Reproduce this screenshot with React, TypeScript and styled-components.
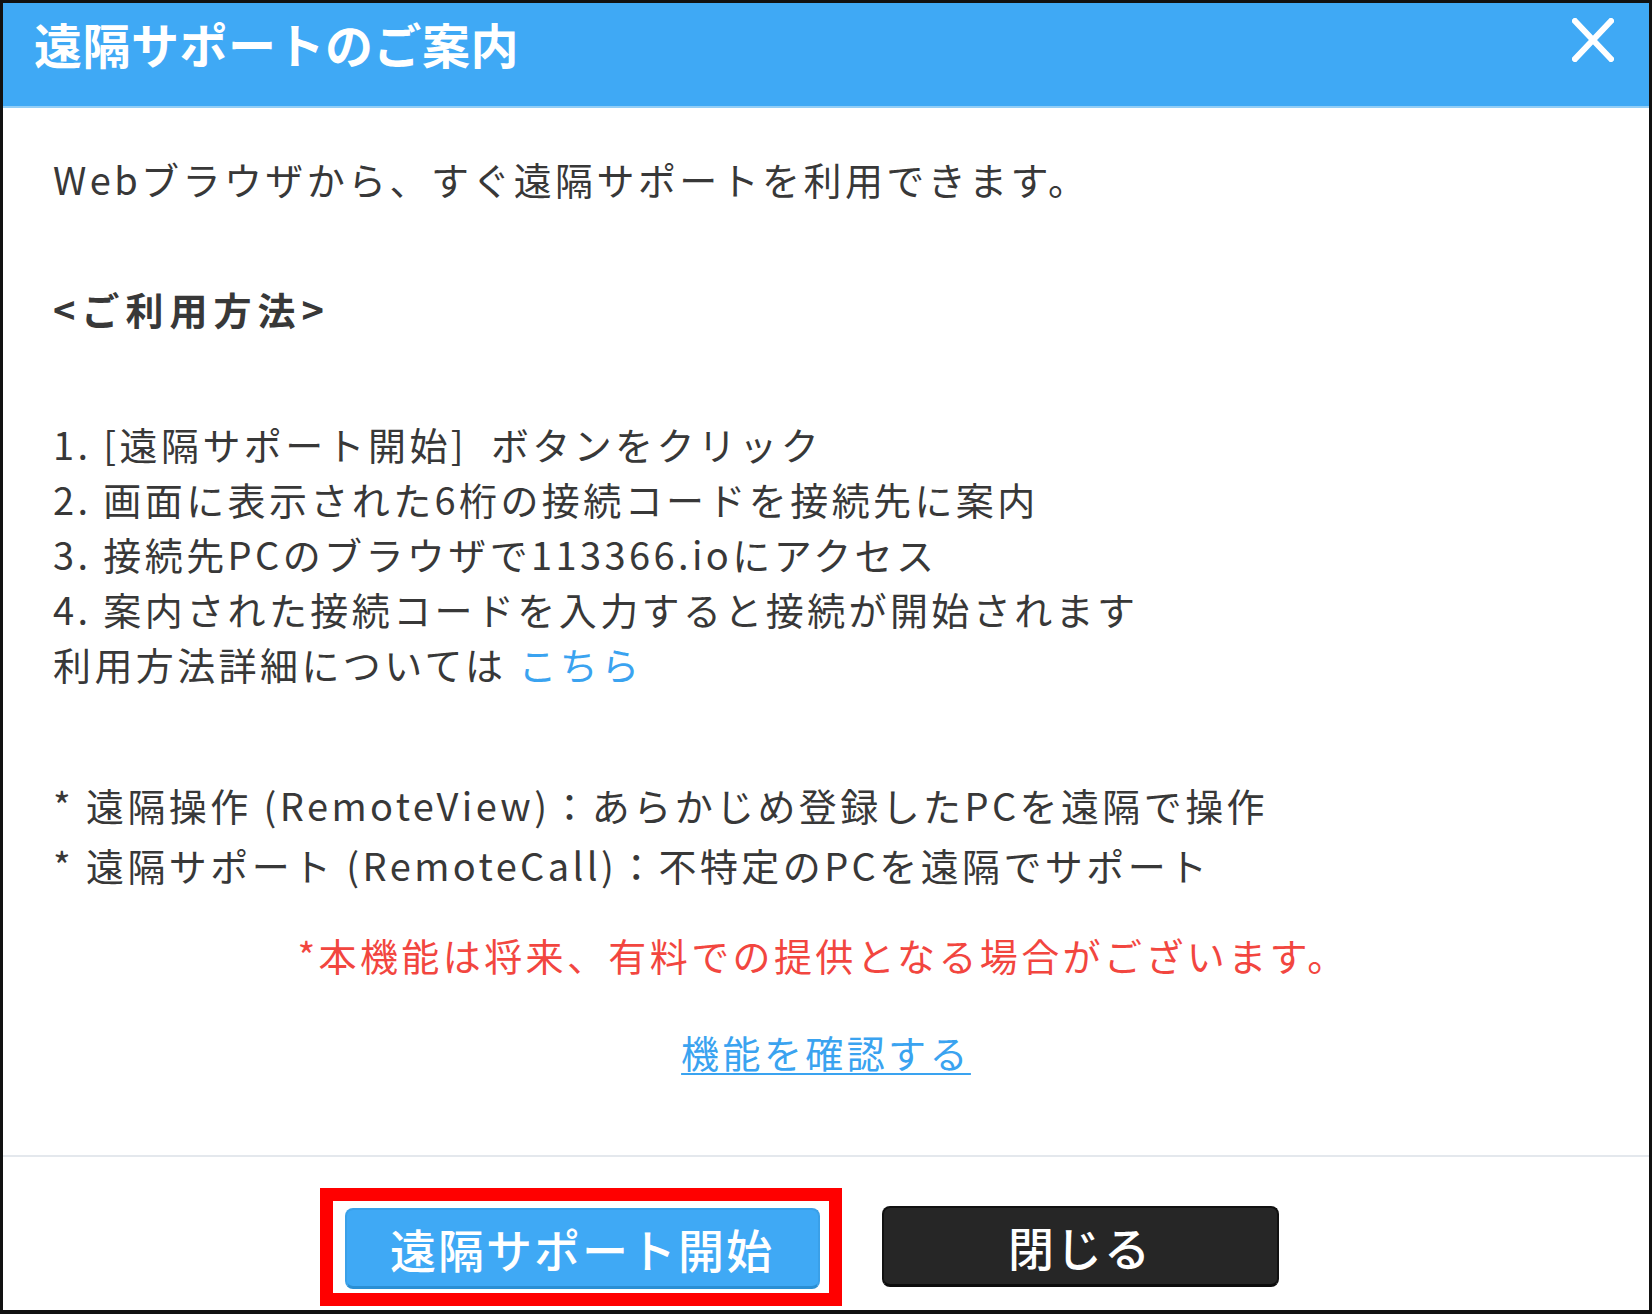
import React from "react";
import styled, { createGlobalStyle } from "styled-components";

const GlobalStyle = createGlobalStyle`
  html, body {
    margin: 0;
    padding: 0;
    background: #fff;
  }
  body {
    font-family: "Noto Sans CJK JP", "Noto Sans", sans-serif;
  }
`;

const steps = [
  "1. [遠隔サポート開始]  ボタンをクリック",
  "2. 画面に表示された6桁の接続コードを接続先に案内",
  "3. 接続先PCのブラウザで113366.ioにアクセス",
  "4. 案内された接続コードを入力すると接続が開始されます",
];

function CloseIcon() {
  return (
    <svg width="42" height="44" viewBox="0 0 42 44" fill="none">
      <path
        d="M3 3 L39 41 M39 3 L3 41"
        stroke="#fff"
        strokeWidth="6"
        strokeLinecap="square"
      />
    </svg>
  );
}

function App() {
  return (
    <>
      <GlobalStyle />
      <Dialog>
        <Header>
          <Title>遠隔サポートのご案内</Title>
          <CloseButton aria-label="close">
            <CloseIcon />
          </CloseButton>
        </Header>
        <Body>
          <Text>Webブラウザから、すぐ遠隔サポートを利用できます。</Text>
          <Heading>&lt;ご利用方法&gt;</Heading>
          <Steps>
            {steps.map((s) => (
              <li key={s}>{s}</li>
            ))}
            <li>
              利用方法詳細については <Link href="#">こちら</Link>
            </li>
          </Steps>
          <Notes>
            <li>* 遠隔操作 (RemoteView)：あらかじめ登録したPCを遠隔で操作</li>
            <li>* 遠隔サポート (RemoteCall)：不特定のPCを遠隔でサポート</li>
          </Notes>
          <Warning>*本機能は将来、有料での提供となる場合がございます。</Warning>
          <Center>
            <Link href="#" underline>
              機能を確認する
            </Link>
          </Center>
        </Body>
        <Footer>
          <Highlight>
            <Button variant="primary" width={475}>
              遠隔サポート開始
            </Button>
          </Highlight>
          <Button variant="dark" width={397}>
            閉じる
          </Button>
        </Footer>
      </Dialog>
    </>
  );
}

export default App;

const Dialog = styled.div`
  box-sizing: border-box;
  width: 1652px;
  height: 1314px;
  border: 3px solid #111;
  border-bottom-width: 4px;
  display: flex;
  flex-direction: column;
  background: #fff;
`;

const Header = styled.div`
  height: 103px;
  flex: none;
  background: #3fa9f5;
  border-bottom: 2px solid #93cef6;
  display: flex;
  align-items: center;
  justify-content: space-between;
  padding: 0 35px 0 31px;
`;

const Title = styled.h1`
  margin: 0;
  color: #fff;
  font-size: 48px;
  font-weight: 700;
  line-height: 1;
  letter-spacing: 0.5px;
  padding-bottom: 24px;
`;

const CloseButton = styled.button`
  background: transparent;
  border: none;
  padding: 0;
  margin-bottom: 30px;
  display: flex;
  cursor: pointer;
`;

const Body = styled.div`
  flex: 1;
  padding: 43px 50px 0 50px;
  color: #383838;
  font-size: 38px;
  line-height: 55px;
  letter-spacing: 3.4px;
  white-space: pre;
`;

const Text = styled.p`
  margin: 0;
`;

const Heading = styled.p`
  margin: 75px 0 0;
  font-weight: 700;
  letter-spacing: 6px;
`;

const Steps = styled.ul`
  list-style: none;
  margin: 80px 0 0;
  padding: 0;
`;

const Notes = styled.ul`
  list-style: none;
  margin: 84px 0 0;
  padding: 0;
  line-height: 60px;
`;

const Warning = styled.p`
  margin: 32px 0 0;
  color: #f2463f;
  text-align: center;
  padding-right: 6px;
`;

const Center = styled.div`
  margin-top: 42px;
  text-align: center;
`;

const Link = styled.a<{ underline?: boolean }>`
  color: #3aa3f0;
  text-decoration: ${(p) => (p.underline ? "underline" : "none")};
  text-underline-offset: 5px;
  text-decoration-thickness: 2px;
`;

const Footer = styled.div`
  flex: none;
  height: 155px;
  box-sizing: border-box;
  border-top: 2px solid #e4e8ed;
  display: flex;
  align-items: center;
  justify-content: center;
  gap: 40px;
  padding: 26px 54px 0 0;
`;

const Highlight = styled.div`
  border: 13px solid #ff0000;
  padding: 7px 9px 4px 12px;
  display: flex;
`;

const Button = styled.button<{ variant: "primary" | "dark"; width: number }>`
  width: ${(p) => p.width}px;
  height: 81px;
  border-radius: 8px;
  font-family: "Noto Sans CJK JP", sans-serif;
  font-size: 46px;
  font-weight: 500;
  color: #fff;
  letter-spacing: 2px;
  cursor: pointer;
  background: ${(p) => (p.variant === "primary" ? "#3fa9f5" : "#262626")};
  border: 2px solid ${(p) => (p.variant === "primary" ? "#3aa0e8" : "#111")};
  border-bottom: 3px solid ${(p) => (p.variant === "primary" ? "#2a8fd4" : "#0c0c0c")};
`;
